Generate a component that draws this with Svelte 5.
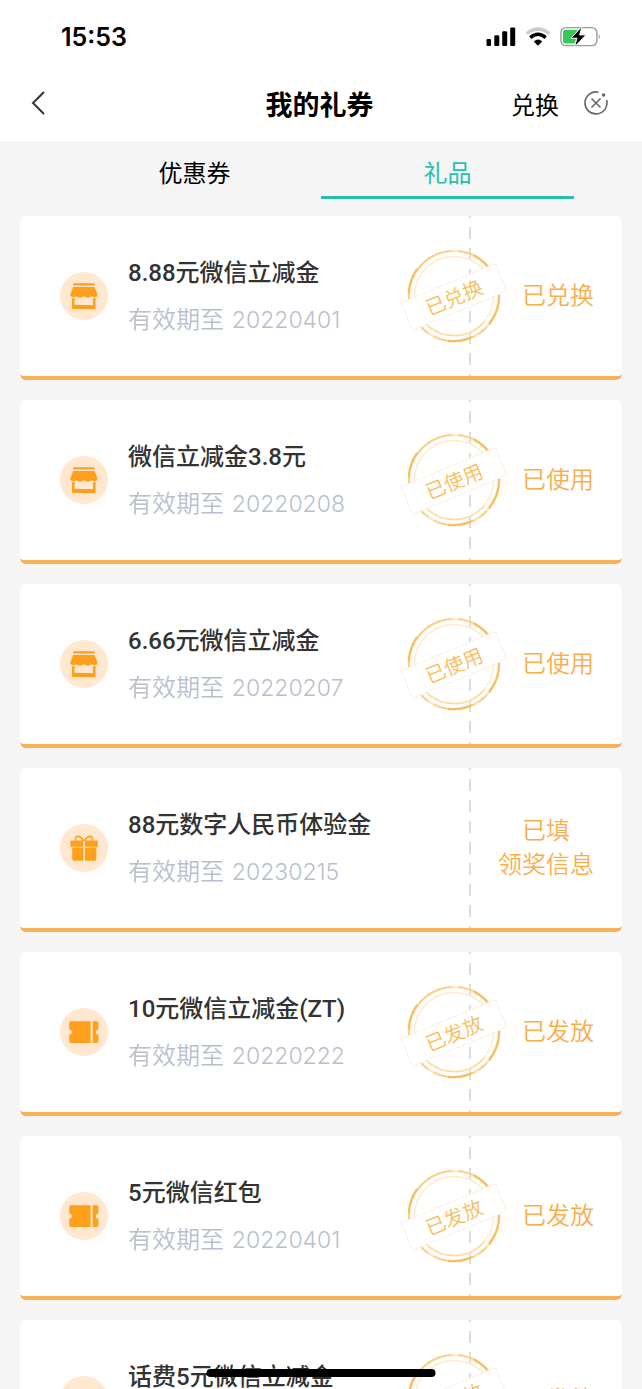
<div class="page">
  <header>
    <div class="status-bar">
      <span class="time">15:53</span>
      <div class="status-icons">
        <svg width="30" height="20" viewBox="0 0 30 20" aria-hidden="true">
          <rect x="0.5" y="12" width="4.5" height="7" rx="1.2" />
          <rect x="8.3" y="8.2" width="5" height="10.8" rx="1.2" />
          <rect x="16.2" y="4.2" width="5" height="14.8" rx="1.2" />
          <rect x="24.2" y="0.4" width="5" height="18.6" rx="1.2" />
        </svg>
        <svg width="26" height="20" viewBox="0 0 26 20" fill="none" aria-hidden="true">
          <path d="M1.8 6.6Q13 -2.6 24.2 6.6" stroke="#cbcbcb" stroke-width="3.4" />
          <path d="M5.3 10.6Q13 4 20.7 10.6" stroke="#000" stroke-width="3.4" />
          <path d="M8.8 14.4Q13 10.6 17.2 14.4L13 18.8Z" fill="#000" />
        </svg>
        <svg width="41" height="22" viewBox="0 0 41 22" aria-hidden="true">
          <rect x="0.9" y="1.6" width="36" height="18" rx="5" fill="#fff" stroke="#9b9b9b" stroke-width="1.4" />
          <path d="M5.5 3.8H18L11 13H16L14.5 17.4H5.5Q3 17.4 3 14.9V6.3Q3 3.8 5.5 3.8Z" fill="#35c759" />
          <path d="M38.8 8Q41 10.6 38.8 13.4Z" fill="#9b9b9b" />
          <path d="M21.8 0.8L11 12.2H17L14.6 20.8L25.8 9H19.6Z" fill="#000" stroke="#fff" stroke-width="0.8" />
        </svg>
      </div>
    </div>
    <nav>
      <button class="back" aria-label="返回">
        <svg width="14" height="24" viewBox="0 0 14 24" fill="none" stroke="#333" stroke-width="2">
          <path d="M13 1L2 12L13 23" />
        </svg>
      </button>
      <h1>我的礼券</h1>
      <div class="nav-right">
        <button>兑换</button>
        <button class="close" aria-label="关闭">
          <svg width="24" height="24" viewBox="0 0 24 24" fill="none" stroke="#666" stroke-width="1.6">
            <path d="M14.5 1.2A11 11 0 1 0 22.6 9" />
            <path d="M7.5 7.5L16.5 16.5M16.5 7.5L7.5 16.5" />
            <circle cx="19.6" cy="4" r="1.8" fill="#666" stroke="none" />
          </svg>
        </button>
      </div>
    </nav>
  </header>

  <div class="tabs" role="tablist">
    {#each tabs as tab, i}
      <button role="tab" aria-selected={active === i} class:active={active === i} onclick={() => (active = i)}>{tab}</button>
    {/each}
  </div>

  <ul class="list">
    {#each coupons as item}
      <li class="card">
        <div class="icon">
          <svg width="48" height="48" viewBox="0 0 48 48" fill="#ff9f1c" aria-hidden="true">
            {#if item.icon === "shop"}
              <rect x="13.2" y="11.3" width="21.4" height="2.2" rx="0.8" />
              <path d="M13.2 15H34.6L37.6 22.4Q37.2 25.2 34.6 25.2Q32.8 25.2 31.6 24Q30.4 25.8 28 25.8Q25.6 25.8 24 24Q22.4 25.8 20 25.8Q17.6 25.8 16.4 24Q15.2 25.2 13.4 25.2Q10.6 25.2 10.2 22.4Z" />
              <path d="M12 26.2H14.6V33H33V26.2H35.6V36.2Q35.6 37 34.8 37H12.8Q12 37 12 36.2Z" />
            {:else if item.icon === "gift"}
              <path d="M23.6 17C20 10.4 13.8 11.4 15.8 16.6M24.4 17C28 10.4 34.2 11.4 32.2 16.6" fill="none" stroke="#ff9f1c" stroke-width="1.6" />
              <path d="M11.2 16.4H23.3V22.7H10.4V17.2Q10.4 16.4 11.2 16.4ZM24.9 16.4H37Q37.8 16.4 37.8 17.2V22.7H24.9Z" />
              <path d="M12.2 23.6H23.3V36.8H14.2Q12.2 36.8 12.2 34.8ZM24.9 23.6H36.4V34.8Q36.4 36.8 34.4 36.8H24.9Z" />
            {:else}
              <path d="M11 13.2H30.6V35H11Q9.2 35 9.2 33.2V26.6A2.6 2.6 0 0 0 9.2 21.4V15Q9.2 13.2 11 13.2Z" />
              <path d="M32.6 13.2H36.6Q38.4 13.2 38.4 15V21.4A2.6 2.6 0 0 0 38.4 26.6V33.2Q38.4 35 36.6 35H32.6Z" />
            {/if}
          </svg>
        </div>
        <div class="info">
          <h2>{item.title}</h2>
          <p>有效期至 <span class="date">{item.date}</span></p>
        </div>
        <div class="state">
          {#if item.stamp}
            <svg class="stamp" width="108" height="100" viewBox="0 0 108 100" fill="none" aria-hidden="true">
              <circle cx="54" cy="50" r="45" stroke="#fee9c6" stroke-width="2.6" />
              <circle cx="54" cy="50" r="45.2" stroke="#f9cb7c" stroke-width="1.4" stroke-dasharray="31 3 12 2 44 6 19 2" />
              <path d="M8.8 47A45.2 45.2 0 0 1 17 23M74 9.5A45.2 45.2 0 0 1 88 21M99 46A45.2 45.2 0 0 1 89 78M72 91A45.2 45.2 0 0 1 48 94.8" stroke="#f8c062" stroke-width="2.2" />
              <circle cx="54" cy="50" r="39.5" stroke="#fdebcc" stroke-width="1.4" />
              <path d="M22 73A39.5 39.5 0 0 0 84 76" stroke="#fbdca4" stroke-width="1.4" />
              <g transform="rotate(-22.5 54 51)">
                <rect x="3" y="36" width="102" height="30" fill="#fff" stroke="#fdeede" />
                <text x="54" y="59" text-anchor="middle">{item.stamp}</text>
              </g>
            </svg>
          {/if}
          <span>{item.state}</span>
        </div>
      </li>
    {/each}
  </ul>

  <div class="home-indicator"></div>
</div>

<script lang="ts">
  type Coupon = {
    icon: "shop" | "gift" | "ticket";
    title: string;
    date: string;
    state: string;
    stamp?: string;
  };

  const tabs = ["优惠券", "礼品"];
  let active = $state(1);

  const coupons: Coupon[] = [
    { icon: "shop", title: "8.88元微信立减金", date: "20220401", state: "已兑换", stamp: "已兑换" },
    { icon: "shop", title: "微信立减金3.8元", date: "20220208", state: "已使用", stamp: "已使用" },
    { icon: "shop", title: "6.66元微信立减金", date: "20220207", state: "已使用", stamp: "已使用" },
    { icon: "gift", title: "88元数字人民币体验金", date: "20230215", state: "已填\n领奖信息" },
    { icon: "ticket", title: "10元微信立减金(ZT)", date: "20220222", state: "已发放", stamp: "已发放" },
    { icon: "ticket", title: "5元微信红包", date: "20220401", state: "已发放", stamp: "已发放" },
    { icon: "ticket", title: "话费5元微信立减金", date: "20220401", state: "已发放", stamp: "已发放" },
  ];
</script>

<style>
  :global(body) {
    background: #f5f5f5;
  }
  .page {
    display: flex;
    flex-direction: column;
    height: 100vh;
    overflow: hidden;
    font-family: Roboto, "Noto Sans CJK SC", sans-serif;
    font-size: 24px;
    color: #000;
  }
  button {
    padding: 0;
    border: none;
    background: none;
    font: inherit;
    color: inherit;
    cursor: pointer;
  }
  svg {
    display: block;
  }
  header {
    flex: none;
    background: #fff;
  }
  .status-bar {
    display: flex;
    justify-content: space-between;
    align-items: center;
    height: 73px;
    padding: 0 41px 0 61px;
  }
  .time {
    font-family: Inter, sans-serif;
    font-size: 25px;
    font-weight: 600;
  }
  .status-icons {
    display: flex;
    align-items: center;
    gap: 9px;
  }
  nav {
    display: grid;
    grid-template-columns: 1fr auto 1fr;
    align-items: center;
    height: 60px;
    padding: 0 34px 8px 31px;
  }
  .back {
    justify-self: start;
  }
  h1 {
    margin: 0;
    font-size: 27px;
    font-weight: 700;
  }
  .nav-right {
    display: flex;
    justify-content: flex-end;
    align-items: center;
    gap: 25px;
  }
  .tabs {
    display: flex;
    flex: none;
    padding: 0 68px;
  }
  .tabs button {
    flex: 1;
    height: 58px;
    padding-top: 6px;
    border-bottom: 3px solid transparent;
  }
  .tabs button.active {
    border-color: #27bfae;
    color: #27bfae;
  }
  .list {
    display: flex;
    flex-direction: column;
    gap: 20px;
    margin: 0;
    padding: 17px 20px 0;
    list-style: none;
  }
  .card {
    display: flex;
    flex: none;
    align-items: center;
    height: 160px;
    border-bottom: 4px solid #f8b156;
    border-radius: 6px;
    background: #fff;
  }
  .icon {
    margin: 0 20px 0 40px;
    border-radius: 50%;
    background: #ffe8cf;
  }
  .info {
    flex: 1;
  }
  h2,
  p {
    margin: 0;
    font-size: 24px;
    line-height: 34px;
  }
  h2 {
    margin-bottom: 13px;
    font-weight: 500;
    color: #333;
  }
  p {
    font-weight: 350;
    color: #b9bfcd;
  }
  .date {
    margin-left: 2px;
    font-family: Inter, sans-serif;
    font-size: 23px;
    font-weight: 300;
  }
  .state {
    position: relative;
    display: flex;
    justify-content: flex-end;
    align-items: center;
    align-self: stretch;
    width: 125px;
    padding-right: 28px;
    background: repeating-linear-gradient(#dcdce0 0 2px, transparent 2px 11px, #dcdce0 11px 21px) left / 2px 100% no-repeat;
    color: #fbad4a;
    font-weight: 350;
    line-height: 34px;
    text-align: center;
    white-space: pre-line;
  }
  .stamp {
    position: absolute;
    top: 30px;
    left: -69px;
  }
  .stamp text {
    fill: #f9bd5c;
    font-size: 20px;
    font-weight: 350;
  }
  .home-indicator {
    position: fixed;
    bottom: 12px;
    left: 50%;
    width: 229px;
    height: 8px;
    border-radius: 4px;
    background: #000;
    transform: translateX(-50%);
  }
</style>
